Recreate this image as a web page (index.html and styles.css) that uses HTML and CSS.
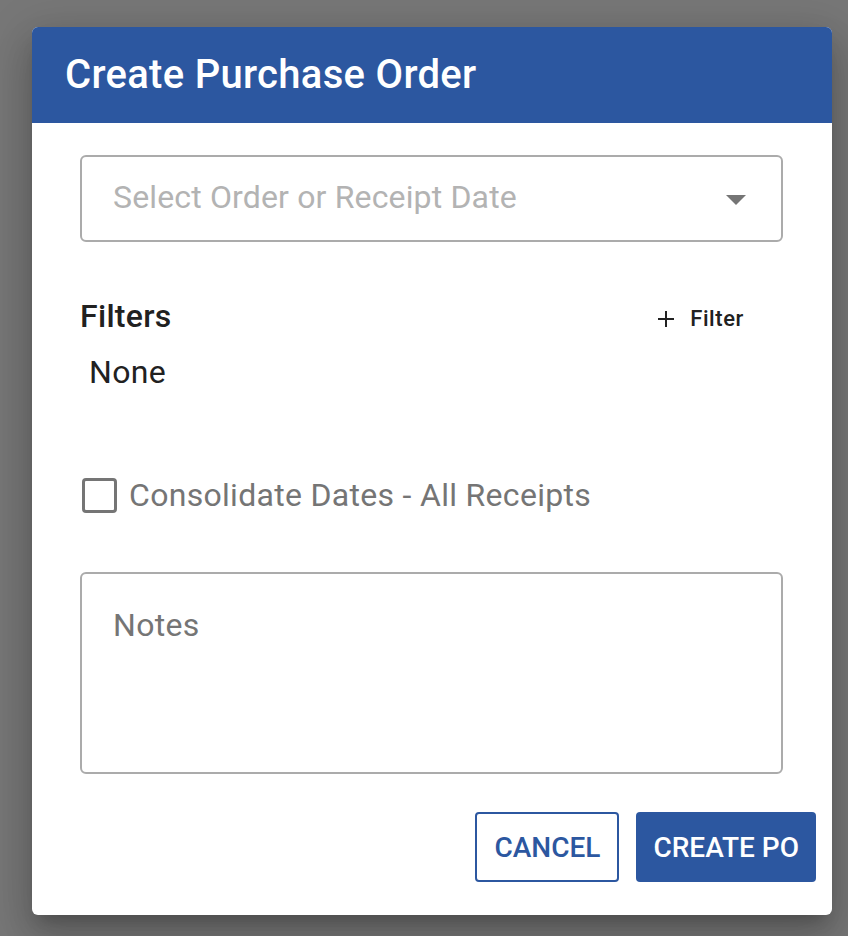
FILE: index.html
```html
<!DOCTYPE html>
<html lang="en">
<head>
    <meta charset="UTF-8">
    <meta name="viewport" content="width=device-width, initial-scale=1.0">
    <title>Create Purchase Order</title>
    <link rel="stylesheet" href="styles.css">
</head>
<body>
    <div class="dialog">
        <div class="dialog-header">
            <h2>Create Purchase Order</h2>
        </div>

        <div class="dialog-body">
            <div class="select">
                <span class="placeholder">Select Order or Receipt Date</span>
                <span class="arrow"></span>
            </div>

            <div class="filters-row">
                <h3>Filters</h3>
                <button class="add-filter">
                    <svg width="16" height="16" viewBox="0 0 16 16">
                        <path d="M8 0v16M0 8h16" stroke="#222" stroke-width="2" fill="none"/>
                    </svg>
                    <span>Filter</span>
                </button>
            </div>
            <div class="filters-list">None</div>

            <label class="check-row">
                <span class="checkbox"></span>
                <span class="check-label">Consolidate Dates - All Receipts</span>
            </label>

            <div class="notes">
                <span class="notes-label">Notes</span>
            </div>
        </div>

        <div class="dialog-actions">
            <button class="btn btn-outline">Cancel</button>
            <button class="btn btn-primary">Create PO</button>
        </div>
    </div>
</body>
</html>
```

FILE: styles.css
```css
body {
    margin: 0;
    height: 936px;
    background-color: #777777;
    font-family: Roboto, "Liberation Sans", Arial, sans-serif;
    overflow: hidden;
}
.dialog {
    width: 800px;
    margin: 27px 0 0 32px;
    background: white;
    border-radius: 6px;
    overflow: hidden;
    box-shadow: 0 11px 15px -7px rgba(0, 0, 0, 0.2), 0 24px 38px 3px rgba(0, 0, 0, 0.14), 0 9px 46px 8px rgba(0, 0, 0, 0.12);
}
.dialog-header {
    height: 96px;
    box-sizing: border-box;
    padding: 0 33px;
    display: flex;
    align-items: center;
    background: #2c57a0;
}
.dialog-header h2 {
    margin: 0;
    color: white;
    font-size: 40px;
    font-weight: 500;
    letter-spacing: 0.3px;
    line-height: 1.6;
}
.dialog-body {
    padding: 32px 49px 0 48px;
}
.select {
    height: 87px;
    box-sizing: border-box;
    border: 2px solid #ababab;
    border-radius: 6px;
    padding: 0 35px 4px 31px;
    display: flex;
    align-items: center;
    justify-content: space-between;
}
.placeholder {
    font-size: 32px;
    line-height: 48px;
    color: #b3b3b3;
    letter-spacing: 0.15px;
}
.arrow {
    margin-top: 7px;
    width: 0;
    height: 0;
    border-left: 10px solid transparent;
    border-right: 10px solid transparent;
    border-top: 10px solid #757575;
}
.filters-row {
    margin-top: 50px;
    display: flex;
    justify-content: space-between;
    align-items: baseline;
}
.filters-row h3 {
    margin: 0;
    font-size: 32px;
    font-weight: 500;
    line-height: 48px;
    color: #212121;
    letter-spacing: 0.3px;
}
.add-filter {
    margin-right: 39px;
    padding: 0;
    border: none;
    background: none;
    display: inline-flex;
    align-items: center;
    gap: 16px;
    font-family: inherit;
    font-size: 22px;
    font-weight: 500;
    line-height: 22px;
    letter-spacing: 0.6px;
    color: #212121;
    cursor: pointer;
}
.filters-list {
    margin: 8px 0 0 9px;
    font-size: 32px;
    line-height: 48px;
    color: #212121;
    letter-spacing: 0.3px;
}
.check-row {
    margin-top: 75px;
    display: flex;
    align-items: center;
    gap: 12px;
}
.checkbox {
    margin-left: 2px;
    width: 35px;
    height: 35px;
    box-sizing: border-box;
    border: 3.5px solid #757575;
    border-radius: 4px;
}
.check-label {
    font-size: 32px;
    line-height: 48px;
    color: #757575;
    letter-spacing: 0.3px;
}
.notes {
    margin-top: 53px;
    height: 202px;
    box-sizing: border-box;
    border: 2px solid #ababab;
    border-radius: 6px;
    padding: 27px 31px;
}
.notes-label {
    font-size: 32px;
    line-height: 48px;
    color: #757575;
    letter-spacing: 0.3px;
}
.dialog-actions {
    padding: 38px 16px 33px;
    display: flex;
    justify-content: flex-end;
    gap: 17px;
}
.btn {
    height: 70px;
    box-sizing: border-box;
    padding: 0 17px;
    border-radius: 4px;
    font-family: inherit;
    font-size: 28px;
    font-weight: 500;
    text-transform: uppercase;
    letter-spacing: 0;
    cursor: pointer;
}
.btn-outline {
    background: white;
    color: #2c57a0;
    border: 2px solid #2c57a0;
}
.btn-primary {
    background: #2c57a0;
    color: white;
    border: none;
}
```
